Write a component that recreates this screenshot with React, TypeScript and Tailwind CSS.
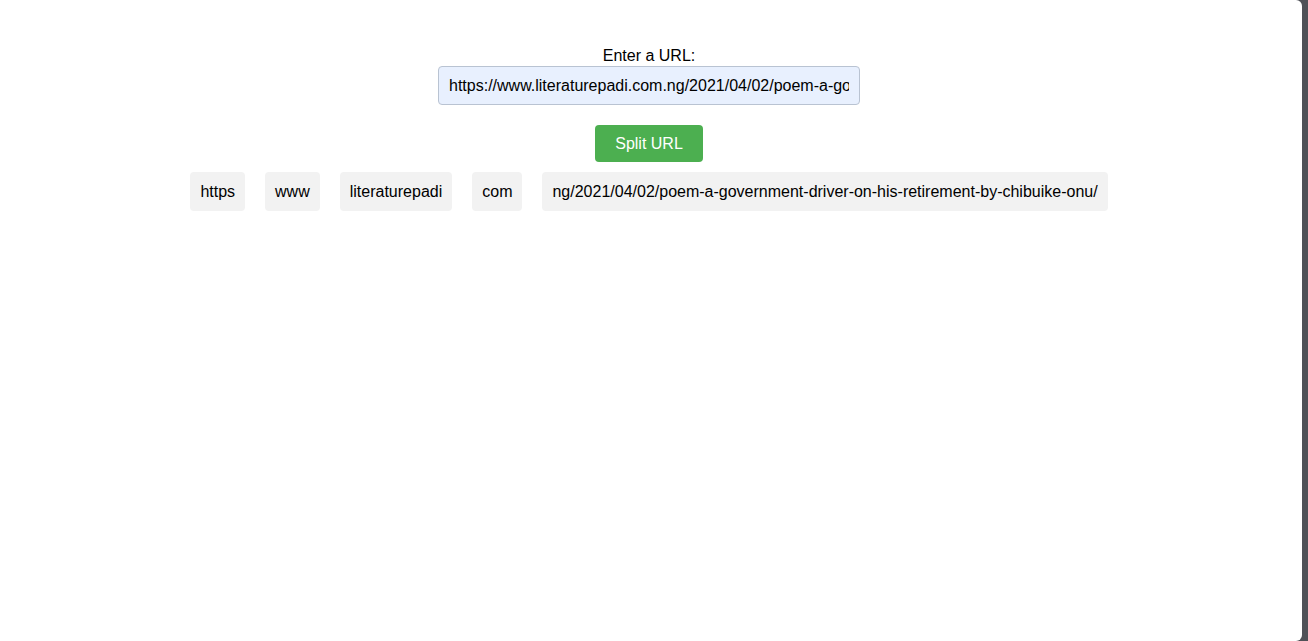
import { useState } from "react";

const START_URL =
  "https://www.literaturepadi.com.ng/2021/04/02/poem-a-government-driver-on-his-retirement-by-chibuike-onu/";

function splitUrl(url: string): string[] {
  return url
    .split(/:\/\/|\.(?=[^/]*\/)|\.(?=ng\/)/)
    .filter((p) => p.length > 0);
}

export default function App() {
  const [url, setUrl] = useState(START_URL);
  const [parts, setParts] = useState<string[]>([
    "https",
    "www",
    "literaturepadi",
    "com",
    "ng/2021/04/02/poem-a-government-driver-on-his-retirement-by-chibuike-onu/",
  ]);

  return (
    <div className="flex h-[641px] w-full bg-[#4f5157] font-['Liberation_Sans',Arial,sans-serif] text-[16px] text-black">
      <main className="mr-[6px] flex-1 rounded-r-[6px] bg-white pr-1">
        <div className="flex flex-col items-center pt-[47px]">
          <label htmlFor="url" className="leading-[18px]">
            Enter a URL:
          </label>
          <input
            id="url"
            type="text"
            value={url}
            onChange={(e) => setUrl(e.target.value)}
            className="mt-[1px] h-[39px] w-[422px] rounded-[4px] border border-[#b9c3d2] bg-[#e8f0fe] px-[10px] text-[16px] text-black outline-none"
          />
          <button
            onClick={() => setParts(splitUrl(url))}
            className="mt-[20px] h-[37px] rounded-[4px] bg-[#4caf50] px-[20px] text-white"
          >
            Split URL
          </button>
          <div className="mt-[10px] flex gap-[20px]">
            {parts.map((p, i) => (
              <span
                key={i}
                className="rounded-[4px] bg-[#f2f2f2] px-[10px] py-[10px] leading-[19px]"
              >
                {p}
              </span>
            ))}
          </div>
        </div>
      </main>
    </div>
  );
}
